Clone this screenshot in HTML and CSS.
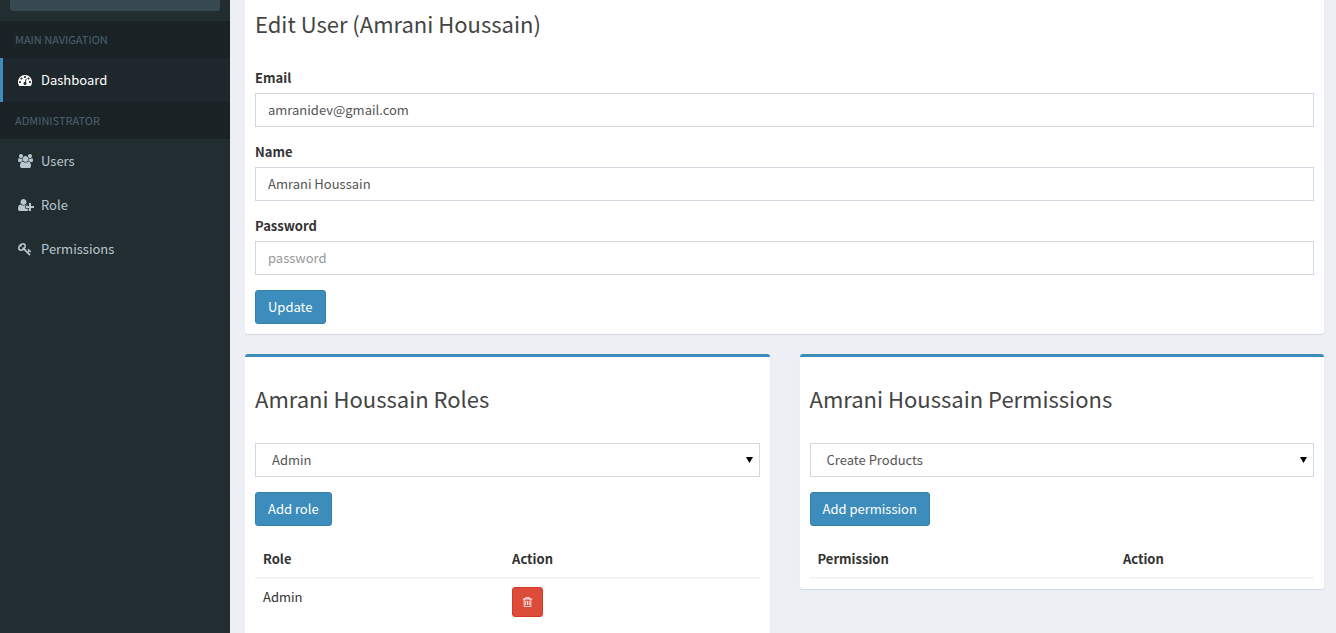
FILE: index.html
```html
<!DOCTYPE html>
<html lang="en">
<head>
<meta charset="utf-8">
<title>Edit User</title>
<link rel="stylesheet" href="styles.css">
</head>
<body>
<div class="wrapper">
  <aside class="sidebar">
    <form class="sidebar-form"><input class="sidebar-search" type="text" aria-label="Search"></form>
    <nav>
      <h2 class="nav-header">MAIN NAVIGATION</h2>
      <a class="nav-link active" href="#"><span class="nav-icon"><svg width="14" height="14" viewBox="0 0 1792 1792"><path d="M384 1152q0-53-37.5-90.5t-90.5-37.5-90.5 37.5-37.5 90.5 37.5 90.5 90.5 37.5 90.5-37.5 37.5-90.5zm192-448q0-53-37.5-90.5t-90.5-37.5-90.5 37.5-37.5 90.5 37.5 90.5 90.5 37.5 90.5-37.5 37.5-90.5zm428 481l101-382q6-26-7.5-48.5t-38.5-29.5-48 6.5-30 39.5l-101 382q-60 5-107 43.5t-63 98.5q-20 77 20 146t117 89 146-20 89-117q16-60-6-117t-72-91zm660-33q0-53-37.5-90.5t-90.5-37.5-90.5 37.5-37.5 90.5 37.5 90.5 90.5 37.5 90.5-37.5 37.5-90.5zm-640-640q0-53-37.5-90.5t-90.5-37.5-90.5 37.5-37.5 90.5 37.5 90.5 90.5 37.5 90.5-37.5 37.5-90.5zm448 192q0-53-37.5-90.5t-90.5-37.5-90.5 37.5-37.5 90.5 37.5 90.5 90.5 37.5 90.5-37.5 37.5-90.5zm320 448q0 261-141 483-19 29-54 29h-1402q-35 0-54-29-141-221-141-483 0-182 71-348t191-286 286-191 348-71 348 71 286 191 191 286 71 348z"/></svg></span>Dashboard</a>
      <h2 class="nav-header">ADMINISTRATOR</h2>
      <a class="nav-link" href="#"><span class="nav-icon"><svg width="15" height="14" viewBox="0 0 1920 1792"><path d="M593 896q-162 5-265 128h-134q-82 0-138-40.500t-56-118.500q0-353 124-353 6 0 43.500 21t97.500 42.500 119 21.500q67 0 133-23-5 37-5 66 0 139 81 256zm1071 637q0 120-73 189.500t-194 69.500h-874q-121 0-194-69.500t-73-189.500q0-53 3.500-103.500t14-109 26.500-108.500 43-97.500 62-81 85.500-53.500 111.500-20q10 0 43 21.500t73 48 107 48 135 21.500 135-21.500 107-48 73-48 43-21.500q61 0 111.500 20t85.500 53.500 62 81 43 97.500 26.500 108.500 14 109 3.500 103.500zm-1024-1277q0 106-75 181t-181 75-181-75-75-181 75-181 181-75 181 75 75 181zm704 384q0 159-112.500 271.500t-271.500 112.500-271.500-112.500-112.500-271.500 112.500-271.500 271.500-112.500 271.500 112.500 112.500 271.500zm576 225q0 78-56 118.500t-138 40.500h-134q-103-123-265-128 81-117 81-256 0-29-5-66 66 23 133 23 59 0 119-21.500t97.500-42.500 43.500-21q124 0 124 353zm-128-609q0 106-75 181t-181 75-181-75-75-181 75-181 181-75 181 75 75 181z"/></svg></span>Users</a>
      <a class="nav-link" href="#"><span class="nav-icon"><svg width="16" height="14" viewBox="0 0 2048 1792"><path d="M704 896q-159 0-271.500-112.500t-112.500-271.500 112.500-271.500 271.500-112.500 271.500 112.500 112.500 271.500-112.500 271.500-271.500 112.500zm960 128h352q13 0 22.500 9.500t9.500 22.500v192q0 13-9.500 22.500t-22.500 9.500h-352v352q0 13-9.500 22.500t-22.500 9.500h-192q-13 0-22.500-9.500t-9.500-22.500v-352h-352q-13 0-22.500-9.500t-9.500-22.500v-192q0-13 9.500-22.500t22.500-9.500h352v-352q0-13 9.500-22.500t22.500-9.500h192q13 0 22.500 9.500t9.500 22.500v352zm-736 224q0 52 38 90t90 38h256v238q-68 50-171 50h-874q-121 0-194-69t-73-190q0-53 3.500-103.500t14-109 26.500-108.500 43-97.500 62-81 85.500-53.500 111.500-20q19 0 39 17 79 61 154.500 91.500t164.500 30.500 164.500-30.500 154.500-91.500q20-17 39-17 132 0 217 96h-223q-52 0-90 38t-38 90v192z"/></svg></span>Role</a>
      <a class="nav-link" href="#"><span class="nav-icon"><svg width="14" height="14" viewBox="0 0 1792 1792"><path d="M832 512q0-80-56-136t-136-56-136 56-56 136q0 42 19 83-41-19-83-19-80 0-136 56t-56 136 56 136 136 56 136-56 56-136q0-42-19-83 41 19 83 19 80 0 136-56t56-136zm851 704q0 17-49 66t-66 49q-9 0-28.500-16t-36.500-33-38.500-40-24.500-26l-96 96 220 220q28 28 28 68 0 42-39 81t-81 39q-40 0-68-28l-671-671q-176 131-365 131-163 0-265.500-102.500t-102.500-265.500q0-160 95-313t248-248 313-95q163 0 265.500 102.500t102.500 265.500q0 189-131 365l355 355 96-96q-3-3-26-24.500t-40-38.500-33-36.500-16-28.500q0-17 49-66t66-49q13 0 23 10 6 6 46 44.500t82 79.500 86.500 86 73 78 28.500 41z"/></svg></span>Permissions</a>
    </nav>
  </aside>
  <main class="content">
    <section class="box box-user">
      <h3 class="box-title">Edit User (Amrani Houssain)</h3>
      <form>
        <div class="form-group">
          <label for="email">Email</label>
          <input class="form-control" id="email" type="text" value="amranidev@gmail.com">
        </div>
        <div class="form-group">
          <label for="name">Name</label>
          <input class="form-control" id="name" type="text" value="Amrani Houssain">
        </div>
        <div class="form-group">
          <label for="password">Password</label>
          <input class="form-control" id="password" type="password" placeholder="password">
        </div>
        <button class="btn" type="button">Update</button>
      </form>
    </section>
    <div class="row">
      <section class="box box-primary">
        <h3 class="box-title">Amrani Houssain Roles</h3>
        <form>
          <div class="select-wrap form-group">
            <select class="form-control" aria-label="Role"><option>Admin</option></select>
            <svg class="caret" width="7" height="6" viewBox="0 0 7 6"><path d="M0 0h7L3.500 6z"/></svg>
          </div>
          <button class="btn" type="button">Add role</button>
        </form>
        <table class="table">
          <thead><tr><th>Role</th><th>Action</th></tr></thead>
          <tbody><tr><td>Admin</td><td><button class="btn-delete" type="button" aria-label="Delete"><svg width="11" height="12" viewBox="64 0 1664 1792"><path d="M704 736v576q0 14-9 23t-23 9h-64q-14 0-23-9t-9-23v-576q0-14 9-23t23-9h64q14 0 23 9t9 23zm256 0v576q0 14-9 23t-23 9h-64q-14 0-23-9t-9-23v-576q0-14 9-23t23-9h64q14 0 23 9t9 23zm256 0v576q0 14-9 23t-23 9h-64q-14 0-23-9t-9-23v-576q0-14 9-23t23-9h64q14 0 23 9t9 23zm128 724v-948h-896v948q0 22 7 40.500t14.500 27 10.500 8.500h832q3 0 10.500-8.500t14.500-27 7-40.500zm-672-1076h448l-48-117q-7-9-17-11h-317q-10 2-17 11zm928 32v64q0 14-9 23t-23 9h-96v948q0 83-47 143.500t-113 60.500h-832q-66 0-113-58.500t-47-141.500v-952h-96q-14 0-23-9t-9-23v-64q0-14 9-23t23-9h309l70-167q15-37 54-63t79-26h320q40 0 79 26t54 63l70 167h309q14 0 23 9t9 23z"/></svg></button></td></tr></tbody>
        </table>
      </section>
      <section class="box box-primary">
        <h3 class="box-title">Amrani Houssain Permissions</h3>
        <form>
          <div class="select-wrap form-group">
            <select class="form-control" aria-label="Permission"><option>Create Products</option></select>
            <svg class="caret" width="7" height="6" viewBox="0 0 7 6"><path d="M0 0h7L3.500 6z"/></svg>
          </div>
          <button class="btn" type="button">Add permission</button>
        </form>
        <table class="table">
          <thead><tr><th>Permission</th><th>Action</th></tr></thead>
        </table>
      </section>
    </div>
  </main>
</div>
</body>
</html>
```

FILE: styles.css
```css
* { box-sizing: border-box; }

body {
  margin: 0;
  overflow: hidden;
  background: #ecf0f5;
  color: #333;
  font: 13px/20px "Source Sans Pro", "Noto Sans CJK SC", sans-serif;
}

input, select, button { font: inherit; }
svg { display: block; fill: currentColor; }

.wrapper { display: flex; height: 100vh; }

/* Sidebar */
.sidebar { flex: 0 0 230px; background: #222d32; }
.sidebar-form { padding: 0 10px 10px; }
.sidebar-search {
  display: block;
  width: 100%;
  height: 11px;
  padding: 0 10px;
  border: 0;
  border-radius: 0 0 3px 3px;
  background: #374850;
  color: #fff;
}
.nav-header {
  margin: 0;
  padding: 10px 15px;
  background: #1a2226;
  color: #4b646f;
  font-size: 11px;
  font-weight: 400;
  line-height: 17px;
}
.nav-link {
  display: flex;
  align-items: center;
  gap: 3px;
  padding: 12px 5px 12px 15px;
  border-left: 3px solid transparent;
  color: #b8c7ce;
  text-decoration: none;
}
.nav-link.active { border-left-color: #3c8dbc; background: #1e282c; color: #fff; }
.nav-icon { flex: 0 0 20px; }

/* Content */
.content { flex: 1; min-width: 0; padding: 0 12px 0 15px; }
.row { display: grid; grid-template-columns: 1fr 1fr; gap: 30px; align-items: start; }
.box {
  margin-bottom: 20px;
  padding: 10px;
  border-radius: 3px;
  background: #fff;
  box-shadow: 0 1px 1px rgba(0, 0, 0, .1);
}
.box-user { border-radius: 0 0 3px 3px; }
.box-primary { padding-top: 28px; border-top: 3px solid #3c8dbc; }
.box-title {
  margin: 0 0 32px;
  color: #444;
  font-size: 22px;
  font-weight: 400;
  line-height: 26px;
}

/* Forms */
.form-group { margin-bottom: 15px; }
label { display: block; margin-bottom: 5px; font-weight: 700; }
.form-control {
  display: block;
  width: 100%;
  height: 34px;
  padding: 5px 12px 7px;
  border: 1px solid #d2d6de;
  border-radius: 0;
  background: #fff;
  color: #555;
}
.form-control::placeholder { color: #999; opacity: 1; }
.select-wrap { display: grid; align-items: center; }
.select-wrap > * { grid-area: 1 / 1; }
.select-wrap .form-control { padding: 6px 16px; appearance: none; }
.caret { justify-self: end; margin-right: 7px; color: #000; pointer-events: none; }
.btn {
  display: block;
  height: 34px;
  padding: 6px 12px;
  border: 1px solid #367fa9;
  border-radius: 3px;
  background: #3c8dbc;
  color: #fff;
}
.btn-delete {
  display: block;
  padding: 8px 9px;
  border: 1px solid #d73925;
  border-radius: 3px;
  background: #dd4b39;
  color: #fff;
}

/* Tables */
.table { width: 100%; margin-top: 15px; border-collapse: collapse; }
.table th, .table td { padding: 8px; text-align: left; vertical-align: top; }
.table th { border-bottom: 2px solid #f4f4f4; }
```
